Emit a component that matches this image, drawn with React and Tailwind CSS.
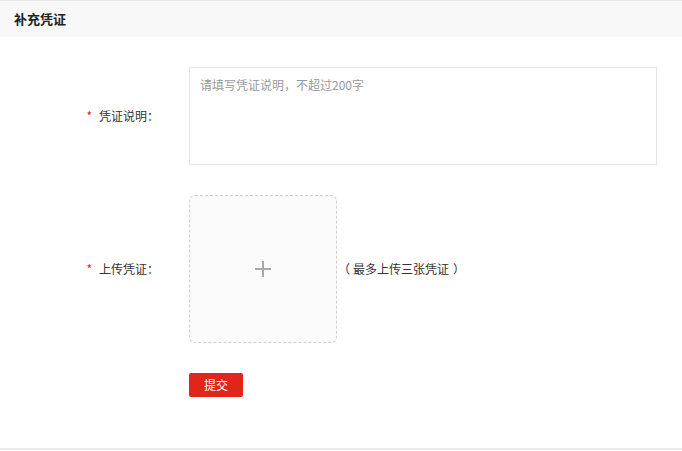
const font = { fontFamily: '"Noto Sans CJK SC", "Noto Sans", sans-serif' }

function Label({ children }) {
  return (
    <div className="flex w-[159px] shrink-0 items-center justify-end text-[12px] text-[#333]">
      <span className="mr-[7px] text-[#e1251b]">*</span>
      {children}
    </div>
  )
}

export default function App() {
  return (
    <div className="h-[451px] w-[682px] bg-white" style={font}>
      <div className="border-t border-[#e8e8e8] bg-[#f8f8f8] px-[14px] py-[8px] text-[13px] font-bold leading-[20px] text-[#222]">
        补充凭证
      </div>

      <div className="border-b-2 border-[#ececec] pb-[51px] pt-[30px]">
        <div className="flex items-center">
          <Label>凭证说明：</Label>
          <textarea
            placeholder="请填写凭证说明，不超过200字"
            className="ml-[30px] block h-[98px] w-[468px] resize-none border border-[#e6e6e6] px-[10px] py-[8px] text-[12px] leading-[18px] text-[#333] outline-none placeholder:text-[#999]"
          />
        </div>

        <div className="mt-[30px] flex items-center">
          <Label>上传凭证：</Label>
          <div className="ml-[30px] flex h-[148px] w-[148px] items-center justify-center rounded-[6px] border border-dashed border-[#d0d0d0] bg-[#fafafa]">
            <svg width="16" height="16" viewBox="0 0 16 16" className="text-[#a8a8a8]">
              <rect x="7" y="0" width="2" height="16" fill="currentColor" />
              <rect x="0" y="7" width="16" height="2" fill="currentColor" />
            </svg>
          </div>
          <span className="ml-[1px] text-[12px] text-[#333]">
            <span className="mr-[3px]">（</span>
            最多上传三张凭证
            <span className="ml-[4px]">）</span>
          </span>
        </div>

        <div className="mt-[30px] pl-[189px]">
          <button className="block h-[24px] w-[54px] rounded-[2px] bg-[#e1251b] text-[12px] text-white">
            提交
          </button>
        </div>
      </div>
    </div>
  )
}
